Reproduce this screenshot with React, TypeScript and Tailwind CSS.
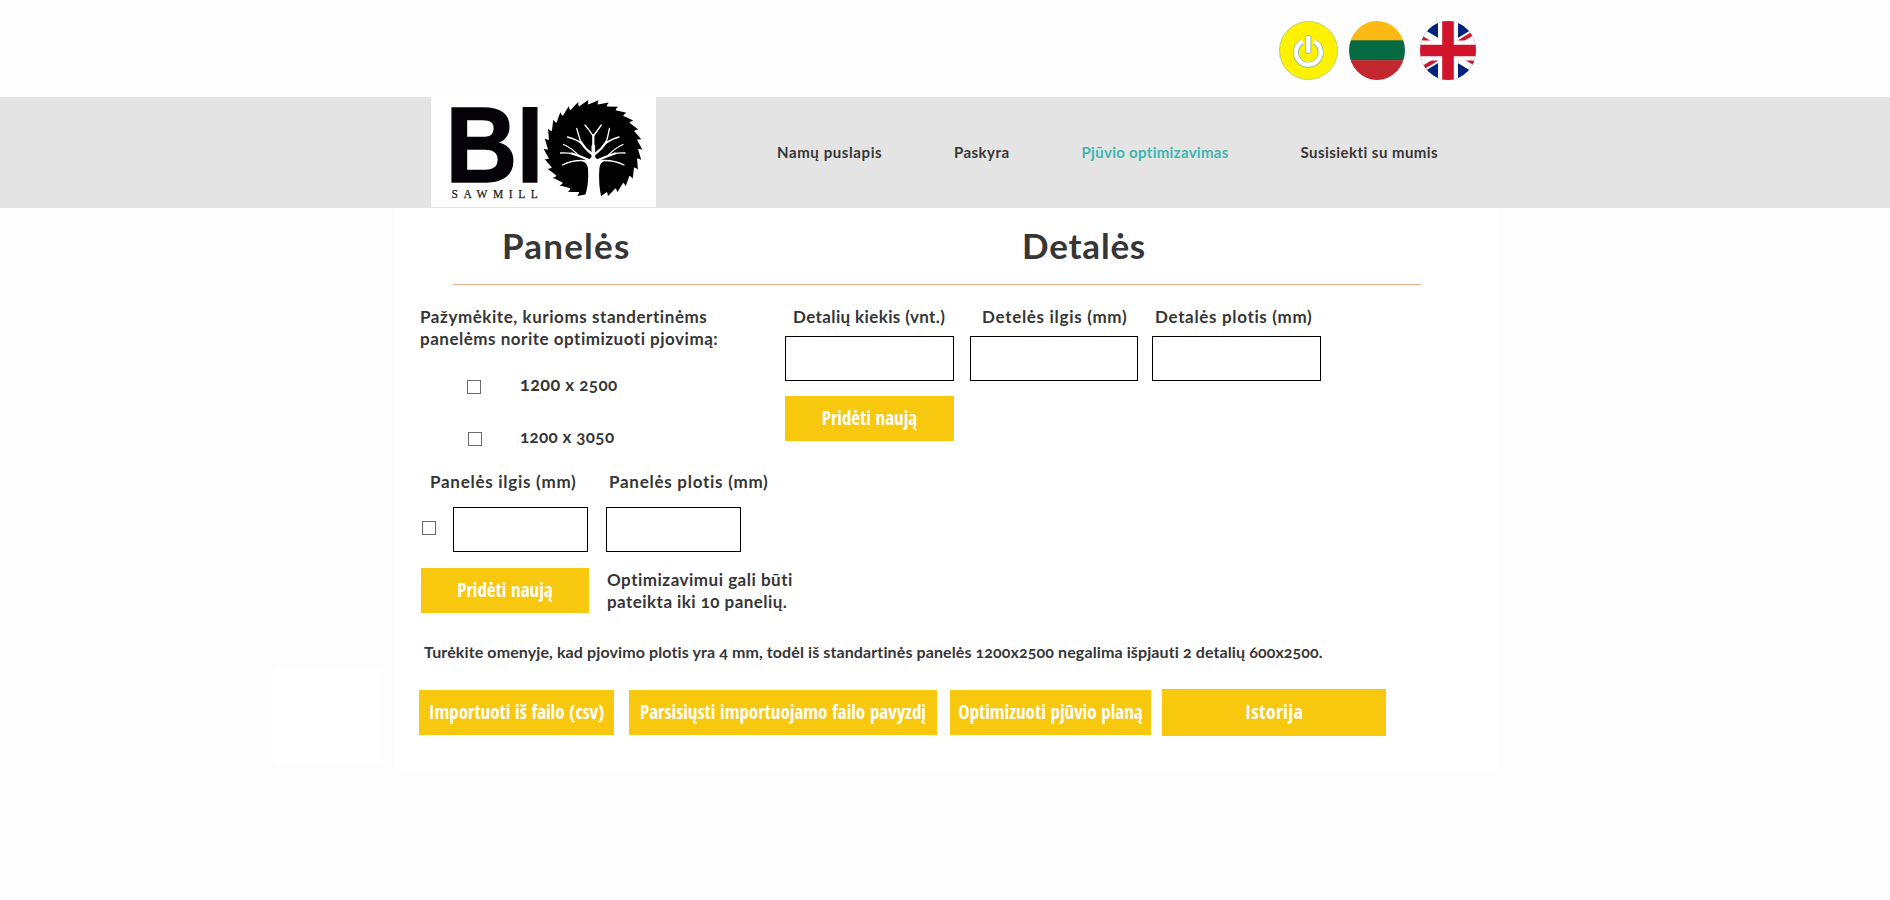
import type { ReactNode } from 'react';

const LATO = "font-['Lato',sans-serif] font-bold text-[#363636] whitespace-nowrap [font-variant-numeric:oldstyle-nums]";
const LABEL = `${LATO} text-[17px] leading-[22px]`;
const BUTTON =
  "flex items-center justify-center bg-[#f8c80f] pb-[2px] font-['Open_Sans_Condensed','Open_Sans',sans-serif] font-bold leading-[26px] whitespace-nowrap text-white";

function sawPath(cx: number, cy: number, teeth: number) {
  const point = (r: number, a: number) =>
    `${(cx + r * Math.cos(a)).toFixed(2)} ${(cy + r * Math.sin(a)).toFixed(2)}`;
  const step = (Math.PI * 2) / teeth;
  let d = '';
  for (let i = 0; i < teeth; i++) {
    const a = i * step;
    d += `${i === 0 ? 'M' : 'L'}${point(45, a)} Q${point(47, a + step * 0.55)} ${point(49.4, a + step * 1.05)} Q${point(46.6, a + step * 0.94)} ${point(45, a + step)} `;
  }
  return `${d}Z`;
}

function Logo() {
  return (
    <svg className="block h-[110px] w-[225px] bg-white" viewBox="0 0 225 110" role="img" aria-label="BIO Sawmill">
      <g
        fill="#050308"
        stroke="#050308"
        strokeWidth="1.6"
        fontFamily="Liberation Sans, Arial, sans-serif"
        fontWeight="700"
        fontSize="108"
      >
        <text transform="translate(14.6 84.8) scale(0.92 1)">B</text>
        <text transform="translate(85.9 84.8) scale(0.87 1)">I</text>
      </g>
      <text
        x="20.5"
        y="100.6"
        fontFamily="Liberation Serif, serif"
        fontSize="11.5"
        letterSpacing="5.6"
        fill="#222"
        stroke="#222"
        strokeWidth="0.25"
      >
        SAWMILL
      </text>
      <path d={sawPath(162, 52.2, 30)} fill="#000" />
      <g fill="none" stroke="#fff" strokeLinecap="round">
        <path strokeWidth="3.6" d="M162.3 64V49" />
        <path
          strokeWidth="2.2"
          d="M162.3 50V38 M161 57Q154 52 149.5 44.5 M164 57Q171 52 175.5 44.5 M159 63.5Q149 59 141 56.5 M166 63.5Q176 59 184 56.5"
        />
        <path
          strokeWidth="1.3"
          d="M161.8 38.5Q159 34 154 28 M162.8 38.5Q166 34 170.3 28 M150 46Q148 39 145.7 31.5 M150.5 46.5Q145 42 136.5 40 M175 46Q177 39 178.5 31.5 M174.5 46.5Q180 42 188 40 M148 59Q141 51 132.5 47.5 M143 57Q136 55.5 129.5 56 M176.5 59Q184 51 192 47.5 M182 57Q188 55.5 194 56 M157 64Q143 62 131.5 68 M167 64Q181 62 193 68"
        />
      </g>
      <path
        fill="#fff"
        d="M150 63.6Q157 64.5 160.5 60H164.1Q167.5 64.5 174.5 63.6Q169 65.5 168.4 71Q167 88 171 103H152.8Q158.4 88 157 71Q156 65.5 150 63.6Z"
      />
    </svg>
  );
}

function PowerIcon() {
  return (
    <svg className="block h-[59px] w-[59px]" viewBox="0 0 59 59">
      <circle cx="29.5" cy="29.5" r="29" fill="#fff200" stroke="#b5d86a" />
      <g fill="none" strokeLinecap="butt">
        <path d="M23 20.8A12.4 12.4 0 1 0 35.6 20.8" stroke="#8fc0a0" strokeWidth="6" />
        <path d="M23.4 20.4A12.4 12.4 0 1 0 35.2 20.4" stroke="#fff" strokeWidth="4.2" />
      </g>
      <rect x="25.6" y="13.4" width="7.4" height="19.6" rx="1.4" fill="#fff200" />
      <rect x="26.7" y="14.7" width="5.2" height="17.6" rx="1" fill="#fff" stroke="#8fc0a0" />
    </svg>
  );
}

function LithuaniaFlag() {
  return (
    <svg className="block h-[59px] w-[56px]" viewBox="0 0 56 59">
      <clipPath id="lt-clip">
        <ellipse cx="28" cy="29.5" rx="28" ry="29.5" />
      </clipPath>
      <g clipPath="url(#lt-clip)">
        <rect width="56" height="20" fill="#fdb913" />
        <rect y="19.3" width="56" height="20.2" fill="#046a42" />
        <rect y="39.2" width="56" height="20" fill="#c1272d" />
      </g>
    </svg>
  );
}

function BritainFlag() {
  return (
    <svg className="block h-[59px] w-[56px]" viewBox="0 0 56 59">
      <clipPath id="uk-clip">
        <ellipse cx="28" cy="29.5" rx="28" ry="29.5" />
      </clipPath>
      <g clipPath="url(#uk-clip)">
        <rect width="56" height="59" fill="#00247d" />
        <path d="M-21 0L77 59M77 0L-21 59" stroke="#fff" strokeWidth="11.5" />
        <path d="M-23 2L28 32.5M79 57L28 26.5M75 -1L28 27.5M-19 60L28 31.5" stroke="#cf142b" strokeWidth="3.8" />
        <path d="M28 0V59M0 29.5H56" stroke="#fff" strokeWidth="20" />
        <path d="M28 0V59M0 29.5H56" stroke="#cf142b" strokeWidth="11.6" />
      </g>
    </svg>
  );
}

function Checkbox({ className }: { className: string }) {
  return (
    <input
      type="checkbox"
      className={`block h-[14px] w-[14px] shrink-0 appearance-none border border-[#6b6b6b] bg-white ${className}`}
    />
  );
}

function Field({ className }: { className: string }) {
  return <input type="text" className={`block h-[45px] shrink-0 border border-black bg-white px-2 ${className}`} />;
}

function Button({ className, children }: { className: string; children: ReactNode }) {
  return <button className={`${BUTTON} shrink-0 ${className}`}>{children}</button>;
}

export default function App() {
  return (
    <div className="relative h-[900px] w-[1890px] overflow-hidden bg-[#fdfdfd]">
      <header className="flex h-[97px] pt-[21px] pl-[1279px]">
        <PowerIcon />
        <div className="ml-[11px]">
          <LithuaniaFlag />
        </div>
        <div className="ml-[15px]">
          <BritainFlag />
        </div>
      </header>

      <nav className="flex h-[111px] bg-[#e4e4e4] pl-[431px]">
        <Logo />
        <div className={`${LATO} flex pt-[44px] pl-[121px] text-[15px] leading-[22px]`}>
          <a className="w-[177px] tracking-[0.6px]">Namų puslapis</a>
          <a className="w-[127.5px] tracking-[0.45px]">Paskyra</a>
          <a className="w-[219px] tracking-[0.3px] text-[#3fb5b0]">Pjūvio optimizavimas</a>
          <a className="tracking-[0.45px]">Susisiekti su mumis</a>
        </div>
      </nav>

      <div className="absolute top-[669px] left-[274px] h-[94px] w-[105px] bg-white" />

      <main className="ml-[395px] h-[564px] w-[1102px] bg-white">
        <div className={`${LATO} flex h-[76px] pt-[15px] pl-[107px] text-[35px] leading-[44px]`}>
          <h1 className="w-[520px] tracking-[1.2px]">Panelės</h1>
          <h1 className="tracking-[0.8px]">Detalės</h1>
        </div>
        <hr className="ml-[58px] h-px w-[968px] border-0 bg-[#ebb088]" />

        <div className="flex h-[356px]">
          <section className="w-[390px] shrink-0 pt-[21px] pl-[25px]">
            <p className={LABEL}>
              <span className="block tracking-[0.56px]">Pažymėkite, kurioms standertinėms</span>
              <span className="block tracking-[0.51px]">panelėms norite optimizuoti pjovimą:</span>
            </p>
            <div className="mt-[23px] flex h-[22px] pl-[47px]">
              <Checkbox className="mt-[7px]" />
              <span className={`${LABEL} ml-[39px] tracking-[0.45px]`}>
                <span className="text-[18px]">1200</span> x 2500
              </span>
            </div>
            <div className="mt-[30px] flex h-[22px] pl-[48px]">
              <Checkbox className="mt-[7px]" />
              <span className={`${LABEL} mt-[1px] ml-[38px] tracking-[0.35px]`}>1200 x 3050</span>
            </div>
            <div className="mt-[24px] flex pl-[10px]">
              <span className={`${LABEL} w-[179px] shrink-0 tracking-[0.73px]`}>Panelės ilgis (mm)</span>
              <span className={`${LABEL} tracking-[0.73px]`}>Panelės plotis (mm)</span>
            </div>
            <div className="mt-[14px] flex pl-[2px]">
              <Checkbox className="mt-[14px]" />
              <Field className="ml-[17px] w-[135px]" />
              <Field className="ml-[18px] w-[135px]" />
            </div>
            <div className="mt-[16px] flex pl-[1px]">
              <Button className="h-[45px] w-[168px] text-[19px]">Pridėti naują</Button>
              <p className={`${LABEL} mt-[1px] ml-[18px]`}>
                <span className="block tracking-[0.5px]">Optimizavimui gali būti</span>
                <span className="block tracking-[0.45px]">pateikta iki 10 panelių.</span>
              </p>
            </div>
          </section>

          <section className="pt-[21px]">
            <div className="flex pl-[8px]">
              <span className={`${LABEL} w-[189px] tracking-[0.38px]`}>Detalių kiekis (vnt.)</span>
              <span className={`${LABEL} w-[173px] tracking-[0.69px]`}>Detelės ilgis (mm)</span>
              <span className={`${LABEL} tracking-[0.66px]`}>Detalės plotis (mm)</span>
            </div>
            <div className="mt-[8px] flex">
              <Field className="w-[169px]" />
              <Field className="ml-[16px] w-[168px]" />
              <Field className="ml-[14px] w-[169px]" />
            </div>
            <Button className="mt-[15px] h-[45px] w-[169px] text-[19px]">Pridėti naują</Button>
          </section>
        </div>

        <p className={`${LATO} pl-[29px] text-[16px] leading-[22px] tracking-[0.11px]`}>
          Turėkite omenyje, kad pjovimo plotis yra 4 mm, todėl iš standartinės panelės 1200x2500 negalima išpjauti 2
          detalių 600x2500.
        </p>

        <div className="mt-[26px] flex items-center pl-[24px]">
          <Button className="h-[45px] w-[195px] text-[19px]">Importuoti iš failo (csv)</Button>
          <Button className="ml-[15px] h-[45px] w-[308px] text-[19px]">Parsisiųsti importuojamo failo pavyzdį</Button>
          <Button className="ml-[13px] h-[45px] w-[201px] text-[19px]">Optimizuoti pjūvio planą</Button>
          <Button className="ml-[11px] h-[47px] w-[224px] text-[20px] tracking-[0.3px]">Istorija</Button>
        </div>
      </main>
    </div>
  );
}
